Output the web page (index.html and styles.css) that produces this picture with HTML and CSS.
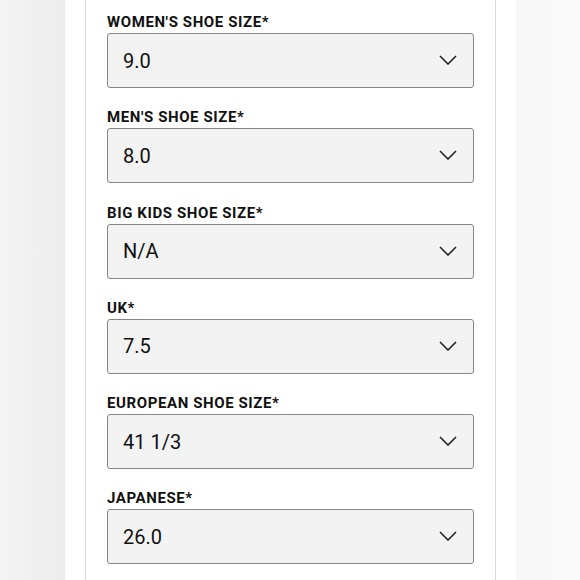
FILE: index.html
```html
<!DOCTYPE html>
<html>
<head>
<meta charset="utf-8">
<link rel="stylesheet" href="styles.css">
</head>
<body>
<div class="page">
  <div class="panel">
    <div class="card">
      <div class="field">
        <div class="label">WOMEN'S SHOE SIZE*</div>
        <div class="select"><span class="value">9.0</span><svg class="chev" viewBox="0 0 18 10"><path d="M1 1 L9 9 L17 1"/></svg></div>
      </div>
      <div class="field">
        <div class="label">MEN'S SHOE SIZE*</div>
        <div class="select"><span class="value">8.0</span><svg class="chev" viewBox="0 0 18 10"><path d="M1 1 L9 9 L17 1"/></svg></div>
      </div>
      <div class="field">
        <div class="label">BIG KIDS SHOE SIZE*</div>
        <div class="select"><span class="value">N/A</span><svg class="chev" viewBox="0 0 18 10"><path d="M1 1 L9 9 L17 1"/></svg></div>
      </div>
      <div class="field">
        <div class="label">UK*</div>
        <div class="select"><span class="value">7.5</span><svg class="chev" viewBox="0 0 18 10"><path d="M1 1 L9 9 L17 1"/></svg></div>
      </div>
      <div class="field">
        <div class="label">EUROPEAN SHOE SIZE*</div>
        <div class="select"><span class="value">41 1/3</span><svg class="chev" viewBox="0 0 18 10"><path d="M1 1 L9 9 L17 1"/></svg></div>
      </div>
      <div class="field">
        <div class="label">JAPANESE*</div>
        <div class="select"><span class="value">26.0</span><svg class="chev" viewBox="0 0 18 10"><path d="M1 1 L9 9 L17 1"/></svg></div>
      </div>
    </div>
  </div>
</div>
</body>
</html>
```
FILE: styles.css
```css
html, body {
  margin: 0;
  padding: 0;
}
body {
  width: 580px;
  height: 580px;
  overflow: hidden;
  font-family: Roboto, "Liberation Sans", sans-serif;
  background: linear-gradient(90deg, #f4f4f4 0px, #ececec 65px, #ffffff 65px, #ffffff 516px, #f7f7f7 516px, #fafafa 580px);
}
.page {
  display: flex;
  justify-content: flex-start;
  padding-left: 65px;
}
.panel {
  width: 451px;
  height: 580px;
  background: #fff;
  padding: 0 20px;
  box-sizing: border-box;
}
.card {
  height: 100%;
  border-left: 1px solid #dcdcdc;
  border-right: 1px solid #dcdcdc;
  padding: 13px 21px 0 21px;
  display: flex;
  flex-direction: column;
  gap: 20.3px;
}
.field {
  display: flex;
  flex-direction: column;
  gap: 2px;
}
.label {
  font-size: 15px;
  font-weight: 700;
  line-height: 18px;
  color: #111;
  letter-spacing: 0.6px;
}
.select {
  position: relative;
  height: 55px;
  box-sizing: border-box;
  border: 1.5px solid #858585;
  border-radius: 3px;
  background: #f3f3f3;
  display: flex;
  align-items: center;
  padding-left: 15px;
}
.value {
  font-size: 20px;
  color: #111;
}
.chev {
  position: absolute;
  right: 16px;
  top: 21px;
  width: 18px;
  height: 10px;
  fill: none;
  stroke: #222;
  stroke-width: 1.6;
}
```
